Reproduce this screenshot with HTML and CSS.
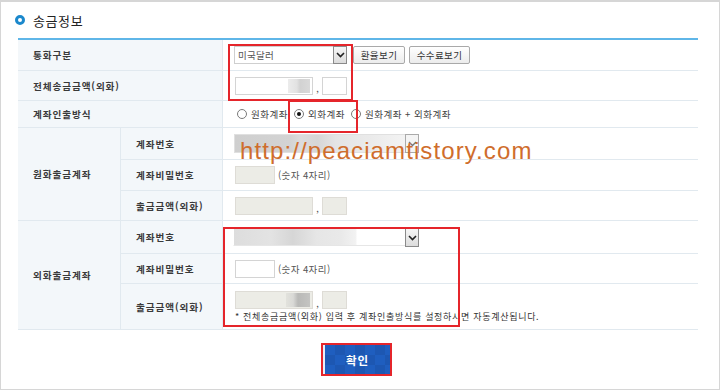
FILE: index.html
```html
<!DOCTYPE html>
<html lang="ko">
<head>
<meta charset="utf-8">
<title>송금정보</title>
<link rel="stylesheet" href="styles.css">
</head>
<body>
<div class="frame">
  <div class="title"><span class="dot"></span><span class="title-text">송금정보</span></div>
  <table class="form">
    <colgroup><col class="c1"><col class="c2"><col class="c3"></colgroup>
    <tr class="h31">
      <th colspan="2">통화구분</th>
      <td>
        <div class="line">
          <div class="select w113"><span class="sel-text">미국달러</span><span class="arrow"><svg width="9" height="6" viewBox="0 0 9 6"><path d="M1 1l3.5 3.5L8 1" fill="none" stroke="#222" stroke-width="1.6"/></svg></span></div>
          <span class="btn b52">환율보기</span>
          <span class="btn b61">수수료보기</span>
        </div>
      </td>
    </tr>
    <tr class="h30">
      <th colspan="2">전체송금금액(외화)</th>
      <td>
        <div class="line">
          <span class="inp w78"><span class="blur1"></span></span><span class="comma">,</span><span class="inp w25"></span>
        </div>
      </td>
    </tr>
    <tr class="h27">
      <th colspan="2">계좌인출방식</th>
      <td>
        <div class="line radios">
          <span class="radio"></span><span class="rlabel">원화계좌</span>
          <span class="radio on"></span><span class="rlabel">외화계좌</span>
          <span class="radio"></span><span class="rlabel">원화계좌 + 외화계좌</span>
        </div>
      </td>
    </tr>
    <tr class="h32">
      <th rowspan="3" class="group">원화출금계좌</th>
      <th class="sub">계좌번호</th>
      <td>
        <div class="line">
          <div class="select w185 blurred"><span class="arrow light"><svg width="9" height="6" viewBox="0 0 9 6"><path d="M1 1l3.5 3.5L8 1" fill="none" stroke="#777" stroke-width="1.4"/></svg></span></div>
        </div>
      </td>
    </tr>
    <tr class="h31">
      <th class="sub">계좌비밀번호</th>
      <td><div class="line"><span class="inp w40 dis"></span><span class="hint">(숫자 4자리)</span></div></td>
    </tr>
    <tr class="h30">
      <th class="sub">출금금액(외화)</th>
      <td><div class="line"><span class="inp w78 dis"></span><span class="comma">,</span><span class="inp w25 dis"></span></div></td>
    </tr>
    <tr class="h33">
      <th rowspan="3" class="group">외화출금계좌</th>
      <th class="sub">계좌번호</th>
      <td>
        <div class="line">
          <div class="select w186 blurred2"><span class="arrow"><svg width="9" height="6" viewBox="0 0 9 6"><path d="M1 1l3.5 3.5L8 1" fill="none" stroke="#222" stroke-width="1.6"/></svg></span></div>
        </div>
      </td>
    </tr>
    <tr class="h30">
      <th class="sub">계좌비밀번호</th>
      <td><div class="line"><span class="inp w40"></span><span class="hint">(숫자 4자리)</span></div></td>
    </tr>
    <tr class="h46">
      <th class="sub">출금금액(외화)</th>
      <td>
        <div class="line"><span class="inp w78 dis"><span class="blur2"></span></span><span class="comma">,</span><span class="inp w25 dis"></span></div>
        <div class="note">* 전체송금금액(외화) 입력 후 계좌인출방식를 설정하시면 자동계산됩니다.</div>
      </td>
    </tr>
  </table>
  <div class="actions"><span class="ok-wrap"><button class="ok">확인</button></span></div>

  <div class="mark m1"></div>
  <div class="mark m2"></div>
  <div class="mark m3"></div>
  <div class="watermark">http://peaciamtistory.com</div>
</div>
</body>
</html>
```
FILE: styles.css
```css
* { box-sizing: border-box; }
html, body { margin: 0; padding: 0; background: #fff; }
body { font-family: "Noto Sans CJK KR", "Noto Sans", sans-serif; color: #333; }

.frame {
  position: relative;
  width: 720px;
  height: 390px;
  border: 1px solid #d6d6d6;
  border-top-width: 2px;
  background: #fff;
  overflow: hidden;
}

.title {
  height: 36px;
  display: flex;
  align-items: center;
  padding-left: 14px;
  gap: 8px;
}
.dot {
  width: 10px; height: 10px;
  border-radius: 50%;
  border: 3px solid #1b88cc;
  background: #fff;
}
.title-text { font-size: 13px; letter-spacing: 0.6px; color: #222; line-height: 1; }

.form {
  margin-left: 17px;
  width: 680px;
  table-layout: fixed;
  border-collapse: separate;
  border-spacing: 0;
  border-top: 2px solid #5fb6e8;
}
.c1 { width: 103px; }
.c2 { width: 102px; }

.form th, .form td {
  padding: 0;
  border-bottom: 1px solid #e1e9ef;
  vertical-align: middle;
}
.form th {
  background: #f3f7fa;
  text-align: left;
  padding-left: 15px;
  font-size: 9.6px;
  font-weight: 700;
  letter-spacing: 0.9px;
  color: #3a3a3a;
  border-right: 1px solid #e1e9ef;
}
.form td { padding-left: 11px; background: #fff; }

.h27 { height: 27px; }
.h30 { height: 30px; }
.h31 { height: 31px; }
.h32 { height: 32px; }
.h33 { height: 33px; }
.h46 { height: 46px; }

.line { display: flex; align-items: center; height: 20px; }

.select {
  position: relative;
  height: 18px;
  border: 1px solid #cfcfcf;
  background: #fff;
  display: flex;
  align-items: center;
}
.w113 { width: 113px; }
.w185 { width: 185px; height: 19px; border-color: #e0e0e0; }
.w186 { width: 186px; margin-left: -1px; border-color: #fff; }
.sel-text { font-size: 9.5px; color: #555; padding-left: 3px; letter-spacing: 0.3px; }
.arrow {
  position: absolute;
  right: -1px; top: -1px;
  width: 14px; height: 18px;
  border: 1px solid #8a8a8a;
  background: linear-gradient(#f6f6f6, #dcdcdc);
  display: flex; align-items: center; justify-content: center;
}
.w185 .arrow, .w186 .arrow { height: 19px; }
.arrow.light { border-color: #aaa; background: #f4f4f4; }

.blurred {
  background: linear-gradient(90deg, #cfcfcf 0, #d3d3d3 30%, #dcdcdc 36%, #d6d6d6 45%, #e4e4e4 55%, #ebebeb 75%, #f3f3f3 92%, #f3f3f3 100%);
}
.blurred2 {
  background: linear-gradient(90deg, #dddddd 0, #e3e3e3 20%, #d6d6d6 32%, #e6e6e6 45%, #e9e9e9 58%, #f2f2f2 66%, #ffffff 67%, #ffffff 100%);
  border-bottom: 1px solid #e6e6e6;
}

.btn {
  height: 18px;
  border: 1px solid #a9a9a9;
  border-radius: 2px;
  background: linear-gradient(#ffffff, #ececec);
  font-size: 9.5px;
  color: #333;
  letter-spacing: 0.4px;
  display: inline-flex; align-items: center; justify-content: center;
}
.b52 { width: 52px; margin-left: 6px; }
.b61 { width: 61px; margin-left: 4px; }

.inp {
  position: relative;
  display: inline-block;
  height: 18px;
  border: 1px solid #d4d4d4;
  background: #fff;
  margin-left: 1px;
}
.w78 { width: 78px; }
.w25 { width: 25px; margin-left: 0; }
.w40 { width: 40px; }
.inp.dis { background: #ecece6; border-color: #dedcd6; }
.comma { width: 9px; font-size: 9px; color: #555; text-align: center; line-height: 1; padding-top: 6px; }
.blur1 {
  position: absolute; left: 52px; top: 1px; width: 22px; height: 14px;
  background: linear-gradient(90deg, #ececec 0, #e2e2e2 40%, #d2d2d2 55%, #d9d9d9 100%);
}
.blur2 {
  position: absolute; left: 50px; top: 1px; width: 24px; height: 14px;
  background: linear-gradient(90deg, #e2e2dc 0, #d9d9d6 30%, #b9b9b7 50%, #c4c4c2 100%);
}
.hint { font-size: 9.5px; color: #555; margin-left: 3px; letter-spacing: 0.4px; }

.radios { padding-left: 3px; }
.radio {
  width: 10px; height: 10px;
  border-radius: 50%;
  border: 1px solid #7a7a7a;
  background: #fff;
  display: inline-flex; align-items: center; justify-content: center;
}
.radio.on::after {
  content: "";
  width: 4px; height: 4px; border-radius: 50%; background: #111;
}
.rlabel { font-size: 9.5px; color: #444; margin-left: 4px; margin-right: 6px; letter-spacing: 0.5px; }

.note {
  font-size: 9px;
  color: #333;
  letter-spacing: 0.7px;
  margin-left: 1px;
  margin-top: 1px;
  line-height: 12px;
  white-space: nowrap;
}

.actions {
  display: flex;
  justify-content: center;
  padding-top: 13px;
}
.ok-wrap {
  display: inline-block;
  border: 2px solid #e5252b;
  margin-left: -7px;
}
.ok {
  display: block;
  width: 67px;
  height: 29px;
  border: 0;
  border-left: 2px solid #e8eef8;
  padding: 0;
  background-color: #1f5ebf;
  background-image:
    linear-gradient(45deg, rgba(0,0,0,0.07) 25%, transparent 25%, transparent 75%, rgba(0,0,0,0.07) 75%),
    linear-gradient(45deg, rgba(0,0,0,0.07) 25%, transparent 25%, transparent 75%, rgba(0,0,0,0.07) 75%);
  background-size: 20px 20px;
  background-position: 0 0, 10px 10px;
  color: #fff;
  font-family: "Noto Sans CJK KR", sans-serif;
  font-size: 11.5px;
  font-weight: 700;
  letter-spacing: 1px;
}

.mark {
  position: absolute;
  border: 2px solid #e5252b;
  pointer-events: none;
}
.m1 { left: 227px; top: 42px; width: 125px; height: 57px; }
.m2 { left: 287px; top: 98px; width: 70px; height: 33px; }
.m3 { left: 222px; top: 225px; width: 237px; height: 100px; }

.watermark {
  position: absolute;
  left: 239px;
  top: 134px;
  font-family: "Liberation Sans", sans-serif;
  font-size: 24px;
  letter-spacing: 1.1px;
  color: #cf6d2c;
  line-height: 30px;
  pointer-events: none;
}
```
